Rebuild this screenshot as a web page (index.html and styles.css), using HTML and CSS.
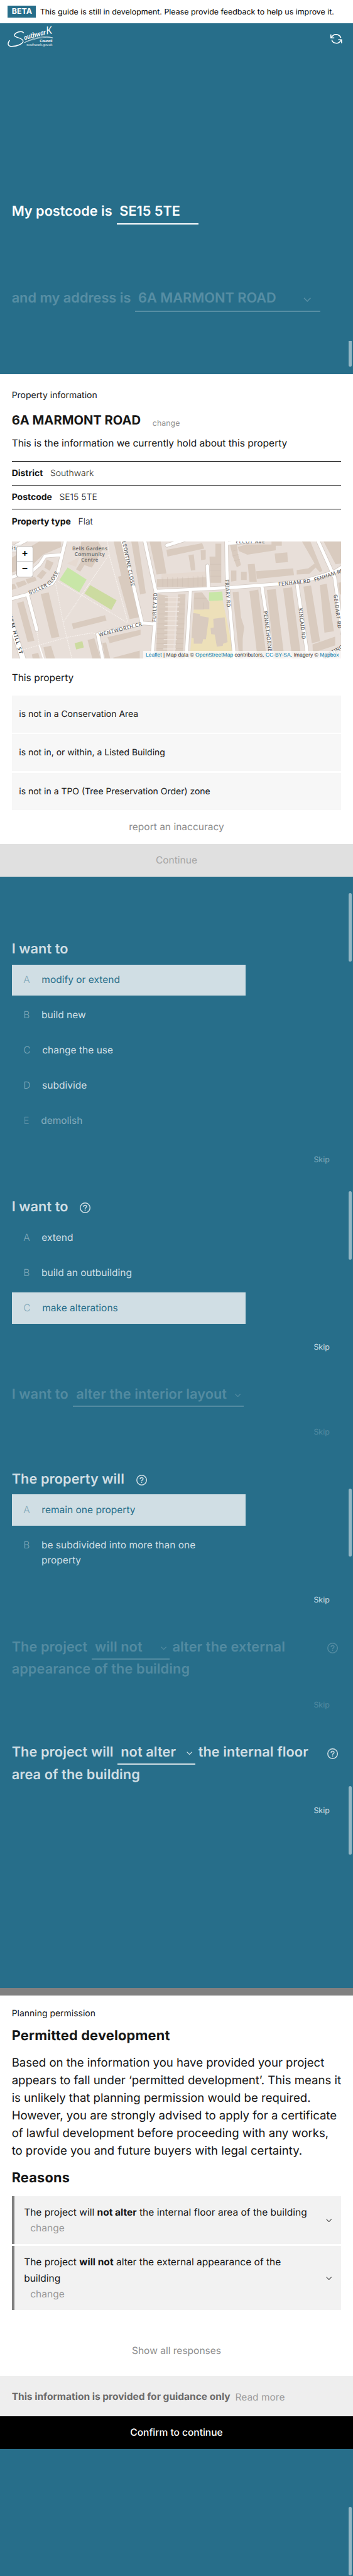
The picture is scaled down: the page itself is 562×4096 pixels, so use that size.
FILE: index.html
```html
<!DOCTYPE html>
<html lang="en">
<head>
<meta charset="utf-8">
<title>Southwark planning guide</title>
<link rel="stylesheet" href="styles.css">
</head>
<body>
<svg class="defs" aria-hidden="true">
  <symbol id="help" viewBox="0 0 22 22"><circle cx="11" cy="11" r="10" fill="none" stroke="currentColor" stroke-width="1.9"/><path d="M7.9 9V8.600Q8 5.800 11 5.800T14.100 8.500C14.100 10.500 11 10.700 11 13.200" fill="none" stroke="currentColor" stroke-width="1.9"/><rect x="10" y="14.700" width="2" height="2" fill="currentColor"/></symbol>
  <symbol id="chev" viewBox="0 0 12 7"><path d="M.8.8 6 6 11.200.8" fill="none" stroke="currentColor" stroke-width="1.600"/></symbol>
</svg>
<div class="page">
  <div class="beta"><span class="tag">BETA</span><span>This guide is still in development. Please provide feedback to help us improve it.</span></div>

  <section class="hero">
    <header class="bar">
      <svg class="logo" viewBox="0 0 94 42">
        <g fill="none" stroke="#fff" stroke-linecap="round">
          <path d="M33 13C29 8 16 12 14 18C13 24 31 22 32 30C32 36 19 41 9 41C1 41-1 36 4 29" stroke-width="1.900"/>
          <path d="M35 33C50 24 78 17 93 23.500C78 20 54 25 35 33" stroke-width=".8"/>
        </g>
        <g fill="#fff">
          <text class="script" transform="translate(35 28) rotate(-15)" textLength="46" lengthAdjust="spacingAndGlyphs">outhwar</text>
          <text class="script k" transform="translate(80 16) rotate(-6)" textLength="12" lengthAdjust="spacingAndGlyphs">K</text>
          <text class="council" x="66" y="32" textLength="26">Council</text>
          <text class="url" x="39" y="40.300" textLength="53">southwark.gov.uk</text>
        </g>
      </svg>
      <svg class="refresh" viewBox="0 0 24 20"><g fill="none" stroke="#fff" stroke-width="2"><path d="M1 1v7h7M2 7.500C5 2 10 0 15 1.500Q20 3 21.500 8"/><path d="M23 19v-7h-7M22 12.500C19 18 14 20 9 18.500Q4 17 3 12"/></g></svg>
    </header>
    <div class="line postcode"><span>My postcode is</span><span class="field">SE15 5TE</span></div>
    <div class="line address"><span>and my address is</span><span class="field">6A MARMONT ROAD<svg class="chev"><use href="#chev"/></svg></span></div>
    <i class="thumb t0"></i>
  </section>

  <section class="panel property">
    <p class="kicker">Property information</p>
    <div class="title"><h2>6A MARMONT ROAD</h2><a>change</a></div>
    <p class="desc">This is the information we currently hold about this property</p>
    <dl class="facts">
      <div><dt>District</dt><dd>Southwark</dd></div>
      <div><dt>Postcode</dt><dd>SE15 5TE</dd></div>
      <div><dt>Property type</dt><dd>Flat</dd></div>
    </dl>
    <div class="map">
      <svg class="tiles" viewBox="0 0 676 240">
        <rect width="676" height="240" fill="#e8dfd9"/>
        <g transform="scale(.4311 .3388) translate(0 -12)">
          <g fill="#d9cbbf">
            <path d="M0 110 130 12H232L235 45 150 90 100 150 0 200ZM165 120 198 140 180 190 155 170ZM145 183 165 200 140 240 118 222ZM65 240 110 225 118 248 75 268ZM18 262 60 247 72 270 30 292ZM0 272 12 268 22 295 0 305Z"/>
            <path d="M330 12H410L432 60 380 170 345 155 325 195 305 180 340 110 320 90Z"/>
            <path d="M484 12H538L605 470 560 482 505 225 520 220ZM568 12H600L637 325 610 332ZM655 12H708L735 205 688 212ZM735 62 905 22 915 55 740 103ZM840 95 865 90 873 185 852 188ZM898 65 922 62V120L900 125Z"/>
            <path d="M940 103H968V25H996V262H945ZM690 240H712V228H925V285L690 288Z"/>
            <path d="M1038 35 1070 28 1075 85 1090 155 1070 168 1050 100ZM1075 45 1115 30H1235V12H1284V38H1255V65L1120 92 1080 70ZM1250 85 1310 78 1313 137 1255 142ZM1122 150 1155 147 1165 255H1130ZM1043 188H1068V250L1043 254ZM1090 195H1117V245H1090ZM1162 192 1338 175 1342 215 1165 238ZM1355 185 1410 175 1440 145 1380 12H1420L1477 190 1465 197 1445 170 1415 208 1355 212ZM1483 12H1568V145L1540 150Z"/>
            <path d="M25 385 55 373 107 612 75 620ZM137 330 175 320 226 588 188 597ZM285 508 443 458 450 490 292 542ZM150 652 186 642 208 732H165ZM95 695 125 685 135 732H100ZM360 608 392 597 425 732H385ZM430 625 448 622 470 732H445ZM455 590 612 545V577L465 627ZM482 715 608 672V732H486Z"/>
            <path d="M697 330 740 340 750 370 740 732H685ZM790 332 826 330 813 732H775ZM868 322 905 320 940 380V425H865V380Z"/>
            <path d="M1050 318 1078 315 1090 470 1105 530 1098 600V732H1083ZM1130 312 1172 303 1213 732H1170ZM1213 305 1255 300 1298 732H1250ZM1290 295 1333 290 1378 732H1335ZM1387 285 1423 278 1466 615 1427 627ZM1465 275 1498 268 1532 555 1487 563ZM1553 262 1568 258V332H1560ZM1430 635 1538 587V640L1432 685Z"/>
          </g>
          <path d="M285 130 262 145 305 165 322 105ZM712 210 925 193V228L712 240ZM742 345H782L765 732H738Z" fill="#e6dad1"/>
          <g stroke="#cbbcaf" stroke-width="1.500" fill="none">
            <path d="M718 230V286M740 228V286M765 228V286M788 228V286M812 226V286M838 224V286M862 222V286M885 220V286M908 218V286M942 150H994M942 185H994M942 222H994M1050 70 1075 62M1050 100 1078 90M1055 130 1085 120"/>
            <path d="M693 360H740M692 390H738M691 420H738M690 450H738M690 480H738M689 510H738M689 540H738M688 570H738M688 600H738M687 630H738M687 660H738M686 690H738M790 360H824M788 390H824M788 420H822M786 450H820M786 480H820M784 510H820M784 540H818M782 570H818M782 600H816M780 630H816M780 660H814M778 690H814M868 355H925M912 382V422"/>
          </g>
          <path d="M728 350H800M728 378H800M730 407H795M728 435H795M726 464H790M726 492H790M725 520H790M725 548H785M725 577H785M722 605H785M722 634H780M720 662H780M720 690H780" stroke="#efe7e1" stroke-width="5"/>
          <path d="M940 372 1003 368 1062 732H845L865 425H912V422H940Z" fill="#ede0b9"/>
          <path d="M862 445 895 450V463L937 472 923 603 910 602 905 630H865V598L855 595ZM958 480 1012 470 1026 620 1005 630 1003 643 975 648 965 575 948 572 945 535 960 532Z" fill="#d9cbbf"/>
          <path d="M938 320 1001 314 1004 368 937 372ZM265 169 355 242 320 319 226 245Z" fill="#c8e6a7"/>
          <path d="M372 275 498 368 473 426 345 327ZM298 627 335 615 342 653 306 665Z" fill="#ccdba0"/>
        </g>
        <g class="paths"><path d="M196 0 200 30 238 166M198 28 143 110 105 166M88 78 143 110 236 166M88 78 105 166 124 244M22 222 110 197 165 187 175 191M51 182 56 212"/></g>
        <path class="casing" d="M110-2 103 26 97 52Q92 75 82 86L30 109 0 117M103 27 68 30 57 47 43 59 0 73M-2 14 32-4M32 109 51 181M226-4 250 94 267 167M272-3 295 102 293 165 287 244M267 167 293 169M267 168 176 190 187 244M295 102 453 94 547 87 600 81 662 62 678 52M366 102 357 244M401 50 403 94M440-3 441 60 443 94 457 244M441 4 510-2M318 8 362-6M627-3 662 74 678 188M513 94 524 165 533 244M585 89 608 244M600 258 680 215"/>
        <path class="roads" d="M110-2 103 26 97 52Q92 75 82 86L30 109 0 117M103 27 68 30 57 47 43 59 0 73M-2 14 32-4M32 109 51 181M226-4 250 94 267 167M272-3 295 102 293 165 287 244M267 167 293 169M267 168 176 190 187 244M295 102 453 94 547 87 600 81 662 62 678 52M366 102 357 244M401 50 403 94M440-3 441 60 443 94 457 244M441 4 510-2M318 8 362-6M627-3 662 74 678 188M513 94 524 165 533 244M585 89 608 244M600 258 680 215"/>
        <path d="M56 213 66 244" stroke="#fff" stroke-width="2.500"/>
        <path d="M-8 150 24 244" stroke="#d3cac3" stroke-width="13"/>
        <path d="M-8 150 24 244" stroke="#fff" stroke-width="10.500"/>
        <rect x="-6" y="7.500" width="25" height="14" rx="2" fill="#f7f5f3" stroke="#c5bdb6"/>
        <g class="names">
          <text x="-3" y="18.500">216</text>
          <text x="123.700" y="18.600" textLength="72">Bells Gardens</text>
          <text x="128.500" y="29.900" textLength="62">Community</text>
          <text x="142" y="41" textLength="35">Centre</text>
          <path id="buller" d="M36 109 70 94Q86 86 99 57" fill="none"/>
          <text textLength="78"><textPath href="#buller">BULLER CLOSE</textPath></text>
          <text transform="translate(226 0) rotate(78.500)" textLength="94">LEONTINE CLOSE</text>
          <text transform="translate(295 165) rotate(-87)" textLength="60">FURLEY RD</text>
          <text transform="translate(437 78) rotate(86)" textLength="57">FRIARY RD</text>
          <text transform="translate(547 91) rotate(-6)" textLength="66">FENHAM RD</text>
          <text transform="translate(621 82) rotate(-18)" textLength="64">FENHAM RD</text>
          <text transform="translate(179 195) rotate(-14.500)" textLength="91">WENTWORTH CR</text>
          <text transform="translate(516 143) rotate(83)" textLength="83">PENNETHORNE</text>
          <text transform="translate(588 137) rotate(83.500)" textLength="64">KINCAID RD</text>
          <text transform="translate(660 109) rotate(83)" textLength="70">GELDART RD</text>
          <text transform="translate(-8 150) rotate(74)" textLength="84" class="strong">HAM HILL ST</text>
          <text x="459" y="4" textLength="60">ELCOT AVE</text>
          <text transform="translate(640 242) rotate(-31)">MEETING</text>
        </g>
      </svg>
      <div class="zoomer"><b>+</b><b>−</b></div>
      <div class="credit"><a>Leaflet</a> | Map data © <a>OpenStreetMap</a> contributors, <a>CC-BY-SA</a>, Imagery © <a>Mapbox</a></div>
    </div>
    <p class="sub">This property</p>
    <ul class="checks">
      <li>is not in a Conservation Area</li>
      <li>is not in, or within, a Listed Building</li>
      <li>is not in a TPO (Tree Preservation Order) zone</li>
    </ul>
    <p class="report">report an inaccuracy</p>
  </section>
  <div class="continue">Continue</div>

  <section class="flow">
    <i class="thumb t1"></i><i class="thumb t2"></i><i class="thumb t3"></i><i class="thumb t4"></i>
    <div class="q">
      <h3>I want to</h3>
      <ul class="options">
        <li class="on"><i>A</i><span>modify or extend</span></li>
        <li><i>B</i><span>build new</span></li>
        <li><i>C</i><span>change the use</span></li>
        <li><i>D</i><span>subdivide</span></li>
        <li class="half"><i>E</i><span>demolish</span></li>
      </ul>
      <p class="skip mid">Skip</p>
    </div>
    <div class="q">
      <h3>I want to<svg class="help"><use href="#help"/></svg></h3>
      <ul class="options">
        <li><i>A</i><span>extend</span></li>
        <li><i>B</i><span>build an outbuilding</span></li>
        <li class="on"><i>C</i><span>make alterations</span></li>
      </ul>
      <p class="skip">Skip</p>
    </div>
    <div class="q faded">
      <div class="line interior"><span>I want to</span><span class="field">alter the interior layout<svg class="chev"><use href="#chev"/></svg></span></div>
      <p class="skip">Skip</p>
    </div>
    <div class="q">
      <h3>The property will<svg class="help"><use href="#help"/></svg></h3>
      <ul class="options">
        <li class="on"><i>A</i><span>remain one property</span></li>
        <li><i>B</i><span>be subdivided into more than one property</span></li>
      </ul>
      <p class="skip">Skip</p>
    </div>
    <div class="q faded">
      <div class="line sentence"><span>The project</span><span class="field">will not<svg class="chev"><use href="#chev"/></svg></span><span>alter the external</span><svg class="help"><use href="#help"/></svg></div>
      <div class="rest">appearance of the building</div>
      <p class="skip">Skip</p>
    </div>
    <div class="q">
      <div class="line sentence"><span>The project will</span><span class="field">not alter<svg class="chev"><use href="#chev"/></svg></span><span>the internal floor</span><svg class="help"><use href="#help"/></svg></div>
      <div class="rest">area of the building</div>
      <p class="skip">Skip</p>
    </div>
  </section>

  <section class="panel result">
    <p class="kicker">Planning permission</p>
    <h2>Permitted development</h2>
    <p class="body">Based on the information you have provided your project<br>appears to fall under ‘permitted development’. This means it<br>is unlikely that planning permission would be required.<br>However, you are strongly advised to apply for a certificate<br>of lawful development before proceeding with any works,<br>to provide you and future buyers with legal certainty.</p>
    <h2>Reasons</h2>
    <div class="reasons">
      <div class="card"><div>The project will <b>not alter</b> the internal floor area of the building<a>change</a></div><svg class="chev"><use href="#chev"/></svg></div>
      <div class="card"><div>The project <b>will not</b> alter the external appearance of the building<a>change</a></div><svg class="chev"><use href="#chev"/></svg></div>
    </div>
    <p class="all">Show all responses</p>
  </section>
  <div class="guidance"><b>This information is provided for guidance only</b><a>Read more</a></div>
  <div class="confirm">Confirm to continue</div>
  <div class="tail"><i class="thumb t5"></i></div>
</div>
</body>
</html>
```
FILE: styles.css
```css
* { box-sizing: border-box; margin: 0; padding: 0; }
html { font-size: 7.762px; background: #276e8a; overflow: hidden; }
body { font-family: Inter, "Liberation Sans", sans-serif; color: #161616; text-rendering: geometricPrecision; }
ul { list-style: none; }
i { font-style: normal; }
.defs { position: absolute; width: 0; height: 0; }
.page { height: 4096px; background: #276e8a; overflow: hidden; }
.chev { width: 1.2rem; height: .7rem; flex: none; }
.help { width: 2.2rem; height: 2.2rem; flex: none; }

.beta { display: flex; align-items: center; gap: .8rem; height: 4.8rem; padding: 0 1.6rem; background: #fff; color: #000; font-size: 1.6rem; white-space: nowrap; }
.tag { width: 5.8rem; height: 2.4rem; line-height: 2.4rem; text-align: center; background: #276e8a; color: #fff; font-weight: 700; }

.thumb { position: absolute; right: .2rem; width: .7rem; height: 14rem; border-radius: .4rem; background: #93b6c4; }
.t0 { top: 65rem; height: 5.3rem; border-radius: 0 0 .4rem .4rem; }
.t1 { top: 3.4rem; }
.t2 { top: 64.4rem; }
.t3 { top: 125.3rem; }
.t4 { top: 186.3rem; }
.t5 { top: 11.9rem; }

.hero { position: relative; height: 71.8rem; color: #fff; }
.bar { display: flex; justify-content: space-between; height: 36.6rem; padding: .6rem 2.2rem 0 1.6rem; }
.logo { width: 9.4rem; height: 4.2rem; overflow: visible; }
.refresh { width: 2.4rem; height: 2rem; margin-top: 1.6rem; }
.script { font: italic 700 15px Lato, sans-serif; }
.k { font-size: 22px; font-weight: 400; }
.council { font: 700 7.5px "Liberation Sans", sans-serif; }
.url { font: 7.5px "Liberation Sans", sans-serif; opacity: .8; }

.line { display: flex; align-items: flex-start; padding-left: 2.4rem; font-size: 2.8rem; font-weight: 600; line-height: 4rem; white-space: nowrap; }
.field { display: flex; justify-content: space-between; border-bottom: .3rem solid; line-height: 4.1rem; padding-left: .6rem; }
.field .chev { margin: 1.8rem .6rem 0 0; }
.postcode { height: 17.7rem; }
.postcode .field { width: 16.8rem; height: 4.6rem; margin-left: .9rem; }
.address { opacity: .22; }
.address .field { width: 37.9rem; height: 4.8rem; margin-left: .9rem; }
.address .chev { width: 1.6rem; height: .9rem; margin: 1.9rem 1.8rem 0 0; }

.panel { background: #fff; padding: 3.3rem 2.4rem 0; }
.property { height: 96.3rem; }
.kicker { font-size: 1.8rem; line-height: 2.4rem; }
.title { display: flex; margin-top: 2.2rem; height: 3.2rem; }
.title h2 { font-size: 2.6rem; line-height: 3.2rem; }
.title a { font-size: 1.6rem; line-height: 2.4rem; margin: 1.1rem 0 0 2.4rem; color: #939393; }
.desc { margin-top: 1.7rem; font-size: 2rem; line-height: 2.8rem; }
.facts { margin-top: 2.2rem; font-size: 1.8rem; }
.facts div { display: flex; align-items: center; gap: 1.5rem; height: 5rem; border-top: 1px solid #000; }
.facts div:first-child { height: 4.9rem; }
.facts dt { font-weight: 700; }
.facts dd { font-weight: 300; }
.map { position: relative; height: 24rem; margin-top: 1.6rem; overflow: hidden; }
.tiles { display: block; width: 67.6rem; height: 24rem; }
.paths { fill: none; stroke: #f7f2ee; stroke-width: 1.6; stroke-dasharray: 2 1.6; }
.roads, .casing { fill: none; stroke: #fff; stroke-width: 6.4; stroke-linecap: round; stroke-linejoin: round; }
.casing { stroke: #d3cac3; stroke-width: 8.6; }
.names { font: 500 10.5px "Noto Sans", sans-serif; fill: #5e5e60; }
.names .strong { font-weight: 600; fill: #444; }
.zoomer { position: absolute; left: 1rem; top: 1rem; width: 3.4rem; border: .2rem solid #b5aea9; border-radius: .5rem; background: #fff; color: #000; }
.zoomer b { display: block; height: 3rem; font: 700 2rem/3rem "Liberation Sans", sans-serif; text-align: center; }
.zoomer b:first-child { height: 3.1rem; border-bottom: 1px solid #ccc; }
.credit { position: absolute; right: 0; bottom: 0; height: 1.6rem; padding: 0 .5rem; background: rgba(255,255,255,.72); font: 1.1rem/1.6rem "Liberation Sans", sans-serif; color: #333; white-space: nowrap; }
.credit a { color: #0078a8; }
.sub { margin-top: 2.6rem; font-size: 2rem; line-height: 2.8rem; }
.checks { display: grid; gap: .3rem; margin-top: 2.2rem; }
.checks li { display: flex; align-items: center; height: 7.6rem; padding-left: 1.5rem; background: #f7f7f7; font-size: 1.8rem; }
.report { margin-top: 2.1rem; font-size: 2rem; line-height: 2.8rem; text-align: center; color: #8c8c8c; }
.continue { height: 6.7rem; line-height: 6.6rem; background: #e0e0e0; color: #a6a6a6; font-size: 2rem; text-align: center; }

.flow { position: relative; height: 227.6rem; padding-top: 12.9rem; color: #d0dee4; }
.q { margin-bottom: 6.5rem; }
.faded { color: #538ba1; }
h3 { display: flex; gap: 2.4rem; padding-left: 2.4rem; height: 4rem; font-size: 2.8rem; font-weight: 600; line-height: 4rem; letter-spacing: .01rem; }
h3 .help { margin-top: 1.1rem; }
.options { display: grid; gap: .8rem; width: 48rem; margin: 1.1rem 0 0 2.4rem; }
.options li { display: flex; gap: 2.4rem; padding: 1.6rem 8rem 1.6rem 2.4rem; font-size: 2rem; line-height: 3.2rem; }
.options i { font-weight: 300; color: #7fa8b9; }
.options .on { background: #d0dee4; color: #276e8a; }
.options .half { opacity: .55; }
.skip { margin: 3.6rem 4.8rem 0 0; height: 2.4rem; font-size: 1.6rem; line-height: 2.4rem; text-align: right; }
.mid { color: #7fa8b9; }
.interior .field { width: 35.1rem; height: 4.5rem; margin-left: .9rem; padding-left: .7rem; }
.interior + .skip { margin-top: 4rem; }
.interior, .sentence, .rest { letter-spacing: .012rem; }
.sentence { height: 4.6rem; padding-right: 3.1rem; }
.sentence .field { width: 16rem; height: 4.5rem; margin: 0 .6rem 0 .8rem; padding-left: .7rem; }
.sentence .help { margin: 1.1rem 0 0 auto; }
.rest { height: 4rem; padding-left: 2.4rem; font-size: 2.8rem; font-weight: 600; line-height: 4rem; }
.rest + .skip { margin-top: 4.1rem; }

.result { height: 79.6rem; padding-top: 2.6rem; border-top: 1.6rem solid #808080; }
.result h2 { margin-top: 1.6rem; font-size: 2.8rem; line-height: 3.6rem; letter-spacing: .03rem; }
.body { margin: 2rem 0; font-size: 2.4rem; line-height: 3.6rem; letter-spacing: -.003rem; white-space: nowrap; }
.reasons { display: grid; gap: .3rem; margin-top: 1.7rem; }
.card { display: flex; align-items: center; justify-content: space-between; padding: 1.7rem 2rem 1.6rem; border-left: 4px solid #808080; background: #f2f2f2; font-size: 2rem; line-height: 3.3rem; }
.card div { width: 59rem; }
.card a { display: block; padding-left: 1.3rem; color: #9a9a9a; }
.card .chev { color: #555; }
.all { margin-top: 7rem; font-size: 2rem; line-height: 2.8rem; text-align: center; color: #8c8c8c; }
.guidance { display: flex; align-items: center; gap: 1rem; height: 8.2rem; padding-left: 2.4rem; background: #eee; font-size: 2rem; color: #6b6b6b; }
.guidance a { padding-top: .3rem; color: #9d9d9d; }
.confirm { height: 6.7rem; line-height: 6.6rem; background: #000; color: #fff; font-size: 2rem; font-weight: 500; text-align: center; }
.tail { position: relative; height: 26.1rem; }
```
